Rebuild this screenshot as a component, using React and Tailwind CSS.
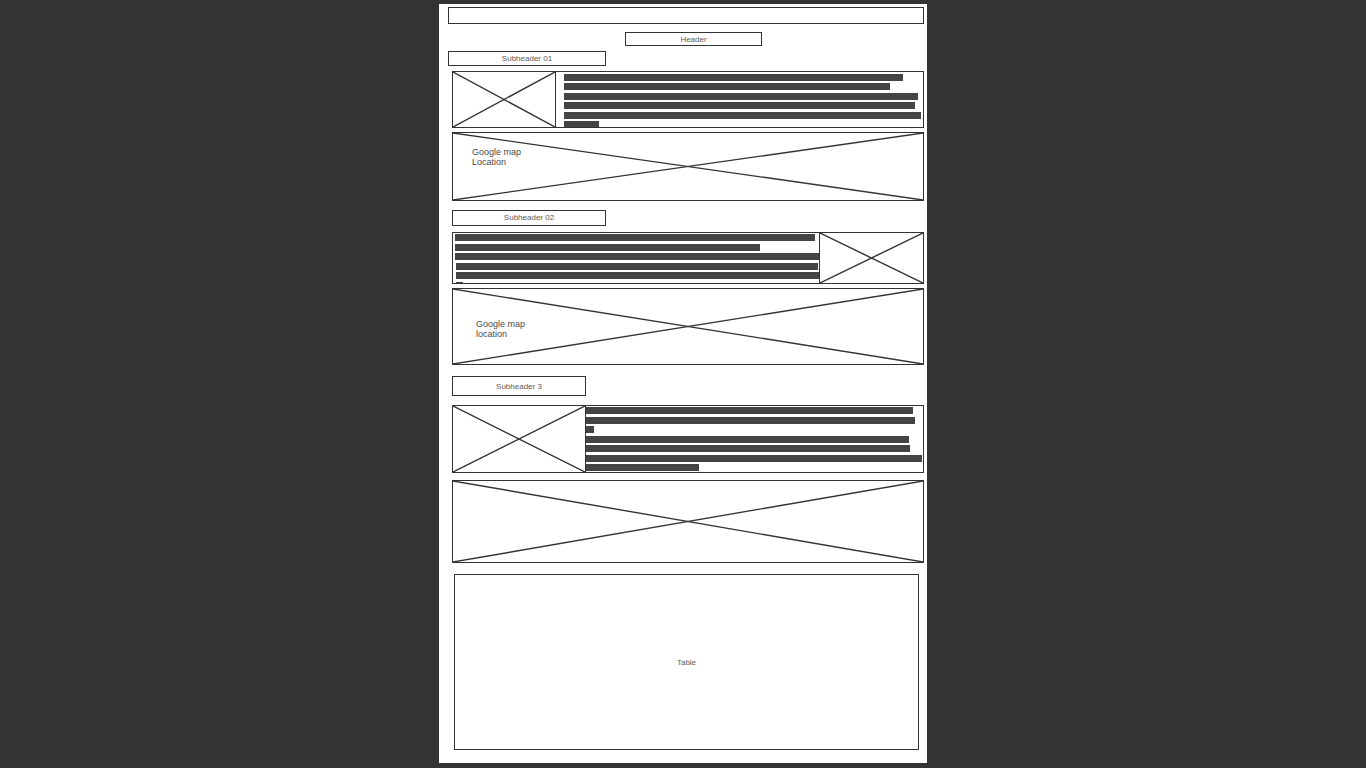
import React from "react";

// wireframe cross drawn corner to corner
function Cross() {
  return (
    <svg
      className="absolute inset-0 w-full h-full"
      viewBox="0 0 100 100"
      preserveAspectRatio="none"
    >
      <line x1="0" y1="0" x2="100" y2="100" stroke="#333" strokeWidth="1.4" vectorEffect="non-scaling-stroke" />
      <line x1="0" y1="100" x2="100" y2="0" stroke="#333" strokeWidth="1.4" vectorEffect="non-scaling-stroke" />
    </svg>
  );
}

function Bars({ items }) {
  return (
    <div className="flex flex-col">
      {items.map((b, i) => (
        <div
          key={i}
          className="h-[7px] bg-[#444] shrink-0"
          style={{ marginTop: b.mt, marginLeft: b.ml || 0, width: b.w }}
        />
      ))}
    </div>
  );
}

const row1 = [
  { mt: 2, w: 339 },
  { mt: 2, w: 326 },
  { mt: 3, w: 354 },
  { mt: 2, w: 351 },
  { mt: 3, w: 357 },
  { mt: 2, w: 35 },
];

const row2 = [
  { mt: 1, w: 360 },
  { mt: 3, w: 305 },
  { mt: 2, w: 364 },
  { mt: 3, w: 362, ml: 1 },
  { mt: 2, w: 363, ml: 1 },
  { mt: 3, w: 7, ml: 1 },
];

const row3 = [
  { mt: 1, w: 327 },
  { mt: 3, w: 329 },
  { mt: 2, w: 8 },
  { mt: 3, w: 323 },
  { mt: 2, w: 324 },
  { mt: 3, w: 336 },
  { mt: 2, w: 113 },
];

export default function App() {
  return (
    <div className="w-full h-[768px] bg-[#333333] overflow-hidden pt-[4px] font-['Liberation_Sans',Arial,sans-serif]">
      <div className="mx-auto w-[488px] h-[759px] bg-white flex flex-col">

        {/* top bar */}
        <div className="mt-[3px] ml-[9px] w-[476px] h-[17px] border border-[#333]" />

        {/* header */}
        <div className="mt-[8px] ml-[186px] w-[137px] h-[14px] pt-[1px] border border-[#333] flex items-center justify-center text-[8px] text-[#5a5a5a]">
          Header
        </div>

        {/* subheader 01 */}
        <div className="mt-[5px] ml-[9px] w-[158px] h-[15px] pt-[1px] border border-[#333] flex items-center justify-center text-[8px] text-[#5a5a5a]">
          Subheader 01
        </div>

        {/* row 1 */}
        <div className="mt-[5px] ml-[13px] w-[472px] h-[57px] border border-[#333] flex overflow-hidden">
          <div className="relative w-[103px] h-full border-r border-[#333] shrink-0">
            <Cross />
          </div>
          <div className="pl-[8px]">
            <Bars items={row1} />
          </div>
        </div>

        {/* map 1 */}
        <div className="relative mt-[4px] ml-[13px] w-[472px] h-[69px] border border-[#333]">
          <Cross />
          <div className="relative pt-[14px] pl-[19px] text-[9px] leading-[10px] text-[#4a4a4a]">
            Google map
            <br />
            Location
          </div>
        </div>

        {/* subheader 02 */}
        <div className="mt-[9px] ml-[13px] w-[154px] h-[16px] border border-[#333] flex items-center justify-center text-[8px] text-[#5a5a5a]">
          Subheader 02
        </div>

        {/* row 2 */}
        <div className="mt-[6px] ml-[13px] w-[472px] h-[52px] border border-[#333] flex overflow-hidden">
          <div className="flex-1 pl-[2px]">
            <Bars items={row2} />
          </div>
          <div className="relative w-[104px] h-full border-l border-[#333] shrink-0">
            <Cross />
          </div>
        </div>

        {/* map 2 */}
        <div className="relative mt-[4px] ml-[13px] w-[472px] h-[77px] border border-[#333]">
          <Cross />
          <div className="relative pt-[30px] pl-[23px] text-[9px] leading-[10px] text-[#4a4a4a]">
            Google map
            <br />
            location
          </div>
        </div>

        {/* subheader 3 */}
        <div className="mt-[11px] ml-[13px] w-[134px] h-[20px] pt-[1px] border border-[#333] flex items-center justify-center text-[8px] text-[#5a5a5a]">
          Subheader 3
        </div>

        {/* row 3 */}
        <div className="mt-[9px] ml-[13px] w-[472px] h-[68px] border border-[#333] flex overflow-hidden">
          <div className="relative w-[133px] h-full border-r border-[#333] shrink-0">
            <Cross />
          </div>
          <div>
            <Bars items={row3} />
          </div>
        </div>

        {/* map 3 */}
        <div className="relative mt-[7px] ml-[13px] w-[472px] h-[83px] border border-[#333]">
          <Cross />
        </div>

        {/* table */}
        <div className="mt-[11px] ml-[15px] w-[465px] h-[176px] pt-[1px] border border-[#333] flex items-center justify-center text-[8px] text-[#5a5a5a]">
          Table
        </div>

      </div>
    </div>
  );
}
